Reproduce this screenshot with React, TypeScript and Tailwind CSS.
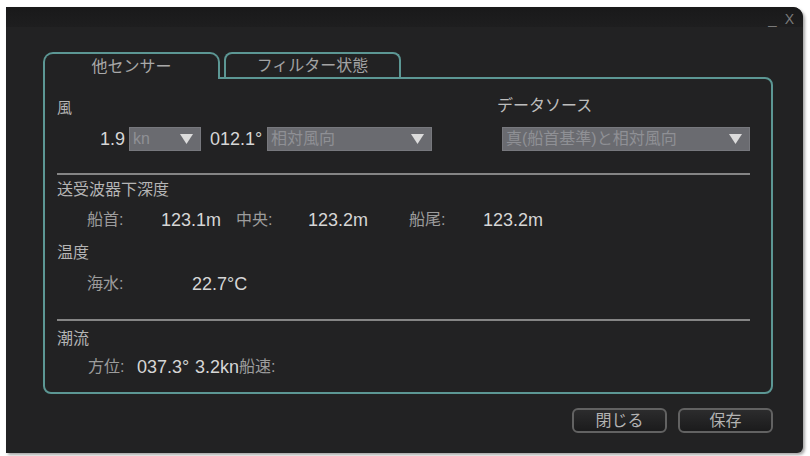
import React from "react";

const JP = { fontFamily: '"Liberation Sans", "Noto Sans CJK JP", sans-serif' };

function Arrow() {
  return (
    <svg width="13" height="10" viewBox="0 0 13 10" className="shrink-0">
      <polygon points="0,0 13,0 6.5,10" fill="#dcdcdc" />
    </svg>
  );
}

function Dropdown({ w, text }: { w: string; text: string }) {
  return (
    <div
      className={`${w} h-[24px] bg-[#6a6b70] border border-[#77787d] flex items-center justify-between pl-[3px] pr-[7px] text-[16px] leading-[18px] text-[#8f9095] overflow-hidden whitespace-nowrap`}
    >
      <span>{text}</span>
      <Arrow />
    </div>
  );
}

export default function App() {
  return (
    <div className="w-[810px] h-[456px] bg-white pt-[7px] pl-[6px]" style={JP}>
      <div className="w-[797px] h-[446px] bg-[#222223] rounded-tr-[10px] rounded-br-[6px] flex flex-col shadow-[2px_2px_3px_rgba(0,0,0,0.35)]">
        {/* title bar */}
        <div className="h-[20px] rounded-tr-[10px] bg-gradient-to-b from-[#19191a] to-[#1e1e1f] flex items-start justify-end pr-[9px] pt-[5px] text-[#7a7a7a]">
          <span className="text-[15px] leading-[14px] mr-[8px]">_</span>
          <span className="text-[14px] leading-[14px]">X</span>
        </div>

        <div className="pl-[37px] pt-[25px] flex flex-col">
          {/* tabs */}
          <div className="flex items-end gap-[4px] h-[25px]">
            <div className="relative z-10 w-[177px] h-[27px] mb-[-2px] border-2 border-b-0 border-[#5c9794] rounded-t-[10px] bg-[#222223] flex justify-center pt-[4px] text-[16px] leading-[18px] text-[#a9a9a9]">
              他センサー
            </div>
            <div className="w-[177px] h-[25px] border-2 border-b-0 border-[#5c9794] rounded-t-[8px] flex justify-center pt-[3px] text-[16px] leading-[18px] text-[#a3a3a3]">
              フィルター状態
            </div>
          </div>

          {/* panel */}
          <div className="w-[730px] h-[317px] border-2 border-[#5c9794] rounded-[8px] rounded-tl-none pl-[12px] flex flex-col">
            <div className="flex">
              <div className="w-[440px] flex flex-col">
                <div className="mt-[20px] text-[15px] leading-[18px] text-[#b5b5b5]">風</div>
                <div className="mt-[10px] flex items-center h-[24px] pl-[43px]">
                  <span className="text-[18px] leading-[20px] text-[#d6d6d6] w-[29px]">1.9</span>
                  <Dropdown w="w-[72px]" text="kn" />
                  <span className="text-[18px] leading-[20px] text-[#d6d6d6] ml-[9px] w-[57px]">012.1°</span>
                  <Dropdown w="w-[165px]" text="相対風向" />
                </div>
              </div>
              <div className="flex flex-col">
                <div className="mt-[18px] text-[16px] leading-[18px] text-[#bdbdbd]">データソース</div>
                <div className="mt-[12px] pl-[5px]">
                  <Dropdown w="w-[248px]" text="真(船首基準)と相対風向" />
                </div>
              </div>
            </div>

            <div className="mt-[22px] w-[693px] h-[2px] bg-[#858585]" />

            <div className="mt-[6px] text-[16px] leading-[18px] text-[#b5b5b5]">送受波器下深度</div>
            <div className="mt-[12px] flex items-center pl-[30px] h-[18px]">
              <span className="w-[74px] text-[16px] text-[#9c9c9c]">船首:</span>
              <span className="w-[75px] text-[18px] text-[#d6d6d6]">123.1m</span>
              <span className="w-[72px] text-[16px] text-[#9c9c9c]">中央:</span>
              <span className="w-[101px] text-[18px] text-[#d6d6d6]">123.2m</span>
              <span className="w-[74px] text-[16px] text-[#9c9c9c]">船尾:</span>
              <span className="text-[18px] text-[#d6d6d6]">123.2m</span>
            </div>

            <div className="mt-[15px] text-[16px] leading-[18px] text-[#b5b5b5]">温度</div>
            <div className="mt-[13px] flex items-center pl-[30px] h-[18px]">
              <span className="w-[105px] text-[16px] text-[#9c9c9c]">海水:</span>
              <span className="text-[18px] text-[#d6d6d6]">22.7°C</span>
            </div>

            <div className="mt-[26px] w-[693px] h-[2px] bg-[#858585]" />

            <div className="mt-[9px] text-[16px] leading-[18px] text-[#b5b5b5]">潮流</div>
            <div className="mt-[10px] flex items-center pl-[31px] h-[18px] whitespace-nowrap">
              <span className="w-[49px] text-[16px] text-[#9c9c9c]">方位:</span>
              <span className="w-[58px] text-[18px] text-[#d6d6d6]">037.3°</span>
              <span className="text-[18px] text-[#d6d6d6]">3.2kn</span>
              <span className="text-[16px] text-[#9c9c9c]">船速:</span>
            </div>
          </div>

          {/* buttons */}
          <div className="w-[730px] mt-[14px] flex justify-end gap-[11px]">
            <button className="w-[95px] h-[25px] border-2 border-[#626262] rounded-[6px] bg-gradient-to-b from-[#2c2c2d] to-[#1b1b1c] text-[16px] leading-[18px] text-[#b3b3b3]">
              閉じる
            </button>
            <button className="w-[95px] h-[25px] border-2 border-[#626262] rounded-[6px] bg-gradient-to-b from-[#2c2c2d] to-[#1b1b1c] text-[16px] leading-[18px] text-[#b3b3b3]">
              保存
            </button>
          </div>
        </div>
      </div>
    </div>
  );
}
